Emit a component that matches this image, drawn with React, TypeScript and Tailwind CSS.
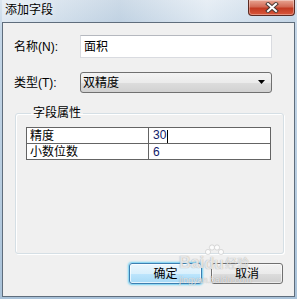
import React from 'react';

const font = "font-['Liberation_Sans','Noto_Sans_CJK_SC',sans-serif]";

function CloseButton() {
  return (
    <div className="absolute right-[2px] top-0 flex h-[16px] w-[47px] items-center justify-center rounded-b-[4px] border border-t-0 border-[#5b2a22] bg-[linear-gradient(#e8a593,#d26a55_45%,#c23a22_55%,#d9583c)] shadow-[inset_0_0_0_1px_rgba(255,255,255,0.35)]">
      <svg width="14" height="11" viewBox="0 0 14 11">
        <path d="M3 2 L11 9 M11 2 L3 9" stroke="#4a3a36" strokeWidth="4" strokeLinecap="square" />
        <path d="M3 2 L11 9 M11 2 L3 9" stroke="#ffffff" strokeWidth="2" strokeLinecap="square" />
      </svg>
    </div>
  );
}

function Watermark() {
  return (
    <div className="pointer-events-none absolute left-[179px] top-[244px] flex flex-col text-white/75 [text-shadow:0_0_1px_rgba(120,120,120,0.8)]">
      <div className="flex items-end">
        <span className="font-['Liberation_Sans',sans-serif] text-[16px] font-bold leading-[16px]">Bai</span>
        <div className="flex flex-col items-center">
          <svg width="20" height="13" viewBox="0 0 20 13" className="opacity-80">
            <circle cx="4" cy="8" r="2.6" fill="#fff" stroke="#bbb" strokeWidth="0.6" />
            <circle cx="8" cy="3.5" r="2.6" fill="#fff" stroke="#bbb" strokeWidth="0.6" />
            <circle cx="13" cy="3.5" r="2.6" fill="#fff" stroke="#bbb" strokeWidth="0.6" />
            <circle cx="17" cy="8" r="2.6" fill="#fff" stroke="#bbb" strokeWidth="0.6" />
          </svg>
          <span className="font-['Liberation_Sans',sans-serif] text-[16px] font-bold leading-[14px]">du</span>
        </div>
        <span className="ml-[1px] font-['Noto_Sans_CJK_SC',sans-serif] text-[12px] leading-[16px]">经验</span>
      </div>
      <span className="mt-[4px] font-['Liberation_Sans',sans-serif] text-[9px] leading-[10px]">jingyan.baidu.com</span>
    </div>
  );
}

export default function App() {
  return (
    <div className={`relative flex h-[299px] w-[297px] flex-col overflow-hidden bg-[linear-gradient(180deg,#dbe6f0,#c4d6e7_10%,#b8cde0_60%,#a9c2d9)] px-[2px] pb-[2px] ${font}`}>
      {/* Title bar */}
      <div className="flex h-[22px] items-start pl-[3px] pt-[3px] bg-[linear-gradient(90deg,rgba(255,255,255,0.4),rgba(170,190,210,0.3)_40%,rgba(255,255,255,0.35)_70%,rgba(180,200,220,0.3))]">
        <span className="text-[12px] leading-[14px] text-black [text-shadow:0_0_6px_rgba(255,255,255,0.9)]">添加字段</span>
      </div>
      <CloseButton />

      {/* Client area */}
      <div className="flex flex-1 flex-col border border-[#5f6d7c] bg-[#f0f0f0] text-[12px] text-black">
        <div className="mt-[12px] flex items-center pl-[11px]">
          <span className="w-[66px] leading-[14px]">名称(N):</span>
          <div className="flex h-[23px] w-[192px] items-center border border-[#d9dbe0] border-t-[#b5b8bf] bg-white pl-[3px]">
            面积
          </div>
        </div>

        <div className="mt-[14px] flex items-center pl-[11px]">
          <span className="w-[66px] leading-[14px]">类型(T):</span>
          <div className="flex h-[21px] w-[192px] items-center justify-between rounded-[3px] border border-[#707070] bg-[linear-gradient(#f3f3f3,#ebebeb_50%,#dddddd_50%,#d1d1d1)] pl-[2px] pr-[5px]">
            <span>双精度</span>
            <svg width="8" height="5" viewBox="0 0 8 5">
              <path d="M0 0 H7 L3.5 4 Z" fill="#000" />
            </svg>
          </div>
        </div>

        <fieldset className="ml-[12px] mt-[13px] h-[148px] w-[269px] rounded-[3px] border border-[#d5dfe5] pl-[10px] shadow-[inset_1px_1px_0_#ffffff,1px_1px_0_#ffffff]">
          <legend className="ml-[5px] px-[2px] leading-[14px]">字段属性</legend>
          <table className="mt-[7px] w-[245px] border-collapse">
            <tbody>
              <tr className="h-[16px]">
                <td className="w-[122px] border border-[#646464] bg-white p-0 pl-[3px] leading-[14px]">精度</td>
                <td className="border border-[#646464] bg-white p-0 pl-[4px] leading-[14px]">
                  <span className="text-[#10206a]">30</span>
                  <span className="ml-[1px] inline-block h-[13px] w-px bg-black align-middle" />
                </td>
              </tr>
              <tr className="h-[16px]">
                <td className="border border-[#646464] bg-white p-0 pl-[3px] leading-[14px]">小数位数</td>
                <td className="border border-[#646464] bg-white p-0 pl-[4px] leading-[14px] text-[#10206a]">6</td>
              </tr>
            </tbody>
          </table>
        </fieldset>

        <div className="mt-[9px] flex justify-end gap-[9px] pr-[11px]">
          <button className="flex h-[21px] w-[73px] items-center justify-center rounded-[3px] border border-[#3c7fb1] bg-[linear-gradient(#eaf6fd,#d9f0fc_50%,#bee6fd_50%,#a7d9f5)] shadow-[0_0_2px_1px_#6fd0f4,inset_0_0_0_1px_rgba(255,255,255,0.7)]">
            确定
          </button>
          <button className="flex h-[21px] w-[72px] items-center justify-center rounded-[3px] border border-[#707070] bg-[linear-gradient(#f2f2f2,#ebebeb_50%,#dddddd_50%,#cfcfcf)] shadow-[inset_0_0_0_1px_rgba(255,255,255,0.6)]">
            取消
          </button>
        </div>
      </div>

      <Watermark />
    </div>
  );
}
